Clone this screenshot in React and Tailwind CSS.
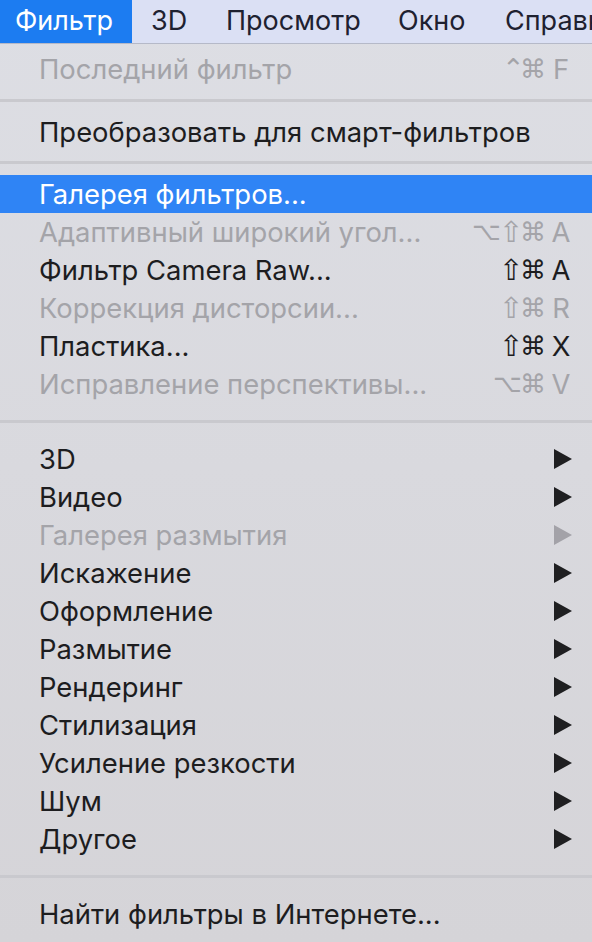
import React from 'react';

const SANS = { fontFamily: 'Inter, "Liberation Sans", Arial, sans-serif' };
const SYM = { fontFamily: '"DejaVu Sans", sans-serif' };

const items = [
  { t: 'Последний фильтр', d: true, sc: ['⌃', '⌘'], k: 'F' },
  { sep: 's' },
  { t: 'Преобразовать для смарт-фильтров' },
  { sep: 's2' },
  { t: 'Галерея фильтров...', hl: true },
  { t: 'Адаптивный широкий угол...', d: true, sc: ['⌥', '⇧', '⌘'], k: 'A' },
  { t: 'Фильтр Camera Raw...', sc: ['⇧', '⌘'], k: 'A' },
  { t: 'Коррекция дисторсии...', d: true, sc: ['⇧', '⌘'], k: 'R' },
  { t: 'Пластика...', sc: ['⇧', '⌘'], k: 'X' },
  { t: 'Исправление перспективы...', d: true, sc: ['⌥', '⌘'], k: 'V' },
  { sep: 'l' },
  { t: '3D', a: true },
  { t: 'Видео', a: true },
  { t: 'Галерея размытия', a: true, d: true },
  { t: 'Искажение', a: true },
  { t: 'Оформление', a: true },
  { t: 'Размытие', a: true },
  { t: 'Рендеринг', a: true },
  { t: 'Стилизация', a: true },
  { t: 'Усиление резкости', a: true },
  { t: 'Шум', a: true },
  { t: 'Другое', a: true },
  { sep: 'l2' },
  { t: 'Найти фильтры в Интернете...' },
];

const MOD = {
  '⌥': 'w-[27px] text-[25px]',
  '⇧': 'w-[21px] text-[29px]',
  '⌘': 'w-[24px] text-[26px]',
  '⌃': 'w-[18px] text-[27px]',
};

function Arrow({ d }) {
  return (
    <svg width="18" height="20" viewBox="0 0 18 20" className="block">
      <polygon points="0,0 18,10 0,20" fill={d ? '#a3a2a8' : '#1f1f21'} />
    </svg>
  );
}

function Row({ it }) {
  const color = it.hl ? 'text-white' : it.d ? 'text-[#a4a4a9]' : 'text-[#1d1d1f]';
  return (
    <div
      className={`flex h-[38px] items-center pl-[39px] pr-[16px] ${it.hl ? 'bg-[#2f84f5]' : ''} ${color}`}
    >
      <span className="flex-1 whitespace-nowrap text-[27.4px] leading-[38px]" style={SANS}>
        {it.t}
      </span>
      {it.sc && (
        <span className="flex items-center">
          {it.sc.map((s, i) => (
            <span key={i} className={`${MOD[s]} text-center leading-[38px]`} style={SYM}>
              {s}
            </span>
          ))}
          <span className="ml-[2px] w-[30px] text-center text-[27.4px] leading-[38px]" style={SANS}>
            {it.k}
          </span>
        </span>
      )}
      {it.a && (
        <span className="mr-[4px] flex items-center">
          <Arrow d={it.d} />
        </span>
      )}
    </div>
  );
}

function Sep({ tall }) {
  return (
    <div className={`flex flex-col justify-center ${tall ? 'h-[37px]' : 'h-[24.5px]'}`}>
      <div className="h-[3px] bg-[#c9c9ce]" />
    </div>
  );
}

export default function App() {
  return (
    <div className="w-[592px] h-[942px] overflow-hidden bg-gradient-to-b from-[#dddee4] to-[#d5d4d8]">
      <div className="flex h-[44px] items-stretch overflow-hidden whitespace-nowrap border-b border-[#b5b9c8] bg-[#dbe0f4] text-[27px] text-[#1e2130]" style={SANS}>
        <div className="flex w-[132px] shrink-0 items-center bg-[#1c7cf1] pl-[15px] text-white">Фильтр</div>
        <div className="flex w-[94px] shrink-0 items-center pl-[19px]">3D</div>
        <div className="flex w-[172px] shrink-0 items-center">Просмотр</div>
        <div className="flex w-[107px] shrink-0 items-center">Окно</div>
        <div className="flex items-center">Справка</div>
      </div>
      <div className="pt-[6px]">
        {items.map((it, i) =>
          it.sep ? <Sep key={i} tall={it.sep === 'l' || it.sep === 'l2'} /> : <Row key={i} it={it} />
        )}
      </div>
    </div>
  );
}
